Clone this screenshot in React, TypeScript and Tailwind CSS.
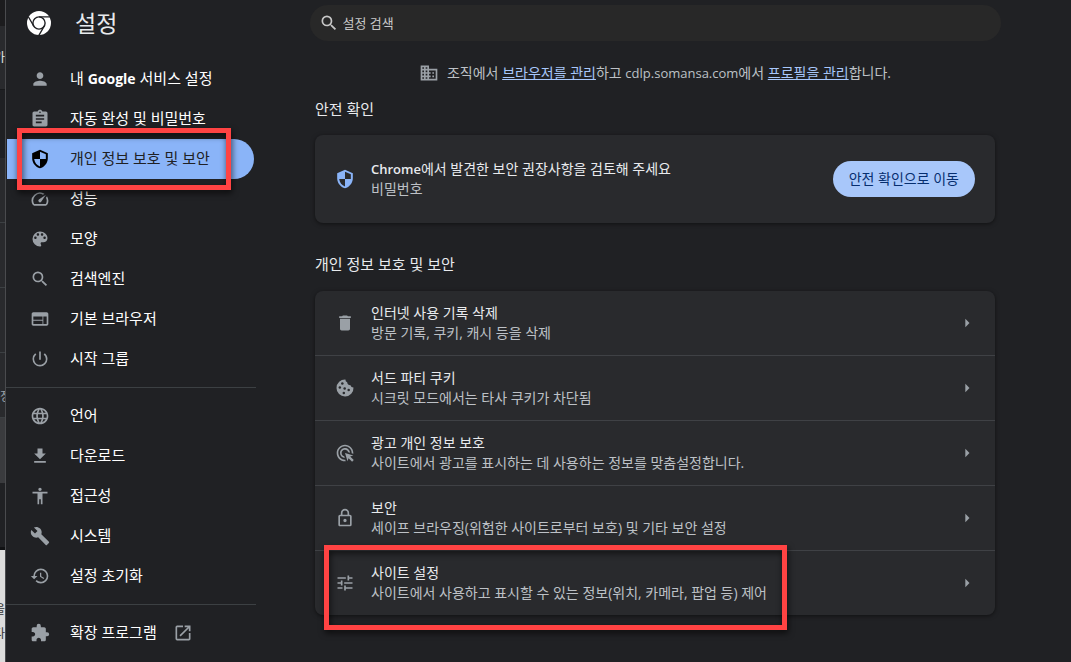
import type React from "react";

import {
  MdAccessibility,
  MdAdsClick,
  MdArrowRight,
  MdAssignment,
  MdBuild,
  MdDelete,
  MdDomain,
  MdDownload,
  MdExtension,
  MdHistory,
  MdLanguage,
  MdOpenInNew,
  MdPerson,
  MdPowerSettingsNew,
  MdSearch,
  MdTune,
  MdWeb,
} from "react-icons/md";

interface NavItem {
  icon: React.ElementType;
  label: React.ReactNode;
  active?: boolean;
  external?: boolean;
}

const mainItems: NavItem[] = [
  {
    icon: MdPerson,
    label: (
      <>
        내 <span className="text-sm font-bold">Google</span> 서비스 설정
      </>
    ),
  },
  { icon: MdAssignment, label: "자동 완성 및 비밀번호" },
  { icon: ShieldIcon, label: "개인 정보 보호 및 보안", active: true },
  { icon: SpeedIcon, label: "성능" },
  { icon: PaletteIcon, label: "모양" },
  { icon: MdSearch, label: "검색엔진" },
  { icon: MdWeb, label: "기본 브라우저" },
  { icon: MdPowerSettingsNew, label: "시작 그룹" },
];

const advancedItems: NavItem[] = [
  { icon: MdLanguage, label: "언어" },
  { icon: MdDownload, label: "다운로드" },
  { icon: MdAccessibility, label: "접근성" },
  { icon: MdBuild, label: "시스템" },
  { icon: MdHistory, label: "설정 초기화" },
];

const extensionItems: NavItem[] = [
  { icon: MdExtension, label: "확장 프로그램", external: true },
];

interface PrivacyRow {
  icon: React.ElementType;
  title: string;
  description: string;
  highlighted?: boolean;
}

const privacyRows: PrivacyRow[] = [
  {
    icon: MdDelete,
    title: "인터넷 사용 기록 삭제",
    description: "방문 기록, 쿠키, 캐시 등을 삭제",
  },
  {
    icon: CookieIcon,
    title: "서드 파티 쿠키",
    description: "시크릿 모드에서는 타사 쿠키가 차단됨",
  },
  {
    icon: MdAdsClick,
    title: "광고 개인 정보 보호",
    description: "사이트에서 광고를 표시하는 데 사용하는 정보를 맞춤설정합니다.",
  },
  {
    icon: LockIcon,
    title: "보안",
    description: "세이프 브라우징(위험한 사이트로부터 보호) 및 기타 보안 설정",
  },
  {
    icon: MdTune,
    title: "사이트 설정",
    description:
      "사이트에서 사용하고 표시할 수 있는 정보(위치, 카메라, 팝업 등) 제어",
    highlighted: true,
  },
];

export default function App() {
  return (
    <div className="flex min-h-screen bg-[#202124] font-['Open_Sans','Noto_Sans_CJK_KR',sans-serif] text-sm text-[#e8eaed]">
      <WindowBehind />
      <Sidebar />
      <main className="min-w-0 flex-1 pt-[5px] pr-[17px]">
        <SearchBox />
        <div className="mx-auto max-w-[680px]">
          <ManagedNotice />
          <SafetyCheck />
          <PrivacySection />
        </div>
      </main>
    </div>
  );
}

// Edge of the window that sits behind the settings window
function WindowBehind() {
  return (
    <div
      aria-hidden="true"
      className="flex w-[6px] shrink-0 flex-col overflow-hidden border-r border-[#4a4b4e] bg-[#202124] text-xs"
    >
      <div className="h-[26px] bg-[#1c1c1e]" />
      <div className="flex h-16 items-center justify-end border-b border-[#18191b] bg-[#292a2d]">
        가
      </div>
      <div className="h-[68px] bg-[#1f2023]" />
      <div className="h-[65px] border-b border-[#3c4043] bg-[#292a2d]" />
      <div className="h-[65px] border-b border-[#3c4043] bg-[#292a2d]" />
      <div className="h-[65px] border-b border-[#3c4043] bg-[#292a2d]" />
      <div className="flex h-[65px] items-end border-b border-[#3c4043] bg-[#292a2d] pb-3 text-[#9aa0a6]">
        정
      </div>
      <div className="h-[65px] bg-[#3a3b3e]" />
      <div className="h-16 bg-[#202124]" />
      <div className="h-[3px] bg-[#111214]" />
      <div className="flex flex-1 flex-col items-end gap-2 bg-[#dcdcdc] pt-[52px] text-[#333333]">
        <span>을</span>
        <span>다</span>
      </div>
    </div>
  );
}

function Sidebar() {
  return (
    <aside className="w-[250px] shrink-0">
      <header className="flex h-[46px] items-center gap-6 pl-[21px]">
        <ChromeLogo />
        <h1 className="text-[23px] leading-8">설정</h1>
      </header>
      <nav className="pt-[13px]">
        <NavList items={mainItems} />
        <hr className="mt-2 mb-2 border-[#3c4043]" />
        <NavList items={advancedItems} />
        <hr className="mt-2 mb-2 border-[#3c4043]" />
        <NavList items={extensionItems} />
      </nav>
    </aside>
  );
}

function NavList({ items }: { items: NavItem[] }) {
  return (
    <ul>
      {items.map((item, index) => (
        <li key={index} className="relative pr-[2px] pl-px">
          <NavLink item={item} />
          {item.active && (
            <Marker className="-top-[11px] left-[11px] h-[62px] w-[214px]" />
          )}
        </li>
      ))}
    </ul>
  );
}

function NavLink({ item }: { item: NavItem }) {
  const Icon = item.icon;

  return (
    <a
      href="#"
      className={
        item.active
          ? "flex h-10 items-center rounded-r-full bg-[#8ab4f8] pl-[23px] text-[15px] text-[#202124]"
          : "flex h-10 items-center rounded-r-full pl-[23px] text-[15px] text-white"
      }
    >
      <Icon
        className={
          item.active ? "size-5 text-black" : "size-5 text-[#9aa0a6]"
        }
      />
      <span className="ml-5 whitespace-nowrap">{item.label}</span>
      {item.external && <MdOpenInNew className="ml-4 size-5 text-[#9aa0a6]" />}
    </a>
  );
}

function SearchBox() {
  return (
    <label className="mx-auto flex h-9 max-w-[691px] items-center gap-1 rounded-full bg-[#282828] pl-[9px]">
      <MdSearch className="size-5 text-[#c7c7c7]" />
      <input
        type="search"
        aria-label="설정 검색"
        placeholder="설정 검색"
        className="min-w-0 flex-1 bg-transparent text-[13px] outline-none placeholder:text-[#c7c7c7]"
      />
    </label>
  );
}

function ManagedNotice() {
  return (
    <div className="flex h-[60px] items-center justify-center gap-2 pt-1 text-[#bdc1c6]">
      <MdDomain className="size-5 text-[#9aa0a6]" />
      <p>
        조직에서{" "}
        <a href="#" className="text-[#a8c7fa] underline">
          브라우저를 관리
        </a>
        하고 <span className="text-[13px]">cdlp.somansa.com</span>에서{" "}
        <a href="#" className="text-[#a8c7fa] underline">
          프로필을 관리
        </a>
        합니다.
      </p>
    </div>
  );
}

function SafetyCheck() {
  return (
    <section>
      <h2 className="pb-[18px] text-[15px] leading-4">안전 확인</h2>
      <div className="flex h-[88px] items-center rounded-lg bg-[#292a2d] px-5 shadow-[0_1px_4px_rgba(0,0,0,0.5)]">
        <ShieldIcon className="size-5 text-[#8ab4f8]" />
        <div className="ml-4 flex-1 leading-5">
          <p>
            <span className="text-[13px] font-semibold">Chrome</span>에서 발견한
            보안 권장사항을 검토해 주세요
          </p>
          <p className="text-[#bdc1c6]">비밀번호</p>
        </div>
        <button
          type="button"
          className="h-9 rounded-full bg-[#a8c7fa] px-4 text-[#062e6f]"
        >
          안전 확인으로 이동
        </button>
      </div>
    </section>
  );
}

function PrivacySection() {
  return (
    <section className="pt-[33px]">
      <h2 className="pb-[19px] text-[15px] leading-4">개인 정보 보호 및 보안</h2>
      <ul className="divide-y divide-[#3f4145] rounded-lg bg-[#292a2d] shadow-[0_1px_4px_rgba(0,0,0,0.5)]">
        {privacyRows.map((row) => {
          const Icon = row.icon;
          return (
            <li key={row.title} className="relative">
              <a href="#" className="flex h-16 items-center pr-[18px] pl-5">
                <Icon className="size-5 text-[#9aa0a6]" />
                <div className="ml-4 flex-1 leading-5">
                  <p>{row.title}</p>
                  <p className="text-[#bdc1c6]">{row.description}</p>
                </div>
                <MdArrowRight className="size-5 text-[#9aa0a6]" />
              </a>
              {row.highlighted && (
                <Marker className="-top-[6px] left-[9px] h-[85px] w-[463px]" />
              )}
            </li>
          );
        })}
      </ul>
    </section>
  );
}

// Red frame drawn around the step to click
function Marker({ className }: { className: string }) {
  return (
    <div
      className={`pointer-events-none absolute z-10 border-[5px] border-[#ff4343] [filter:drop-shadow(1px_3px_3px_rgba(0,0,0,0.7))] ${className}`}
    />
  );
}

function ChromeLogo() {
  return (
    <svg viewBox="0 0 24 24" className="size-6 shrink-0 text-white">
      <circle cx="12" cy="12" r="12" fill="currentColor" />
      <g fill="none" stroke="#202124" strokeWidth="1.4">
        <circle cx="12" cy="12" r="6.1" />
        <path d="M12 5.9h11M6.7 15 1.2 5.5M17.3 15l-5.5 9.5" />
      </g>
    </svg>
  );
}

function ShieldIcon({ className }: { className?: string }) {
  return (
    <svg viewBox="0 0 24 24" fill="currentColor" className={className}>
      <path
        fillRule="evenodd"
        d="M12 1 2.6 5v6c0 5.55 4 10.74 9.4 12 5.4-1.26 9.4-6.45 9.4-12V5L12 1zm0 11h7V6.3l-7-3.11V12zm0 0H5c.53 4.12 3.28 7.79 7 8.94V12z"
      />
    </svg>
  );
}

function SpeedIcon({ className }: { className?: string }) {
  return (
    <svg viewBox="0 0 24 24" fill="currentColor" className={className}>
      <path d="m20.38 8.57-1.23 1.85a8 8 0 0 1-.22 7.58H5.07A8 8 0 0 1 15.58 6.85l1.85-1.23A10 10 0 0 0 3.35 19a2 2 0 0 0 1.72 1h13.85a2 2 0 0 0 1.74-1 10 10 0 0 0-.27-10.44z" />
      <path d="M10.59 15.41a2 2 0 0 0 2.83 0l5.66-8.49-8.49 5.66a2 2 0 0 0 0 2.83z" />
    </svg>
  );
}

function PaletteIcon({ className }: { className?: string }) {
  return (
    <svg viewBox="0 0 24 24" fill="currentColor" className={className}>
      <path d="M12 3a9 9 0 0 0 0 18c.83 0 1.5-.67 1.5-1.5 0-.39-.15-.74-.39-1.01-.23-.26-.38-.61-.38-.99 0-.83.67-1.5 1.5-1.5H16c2.76 0 5-2.24 5-5 0-4.42-4.03-8-9-8zm-5.5 9c-.83 0-1.5-.67-1.5-1.5S5.67 9 6.5 9 8 9.67 8 10.5 7.33 12 6.5 12zm3-4C8.67 8 8 7.33 8 6.5S8.67 5 9.5 5s1.5.67 1.5 1.5S10.33 8 9.5 8zm5 0c-.83 0-1.5-.67-1.5-1.5S13.67 5 14.5 5s1.5.67 1.5 1.5S15.33 8 14.5 8zm3 4c-.83 0-1.5-.67-1.5-1.5S16.67 9 17.5 9s1.5.67 1.5 1.5-.67 1.5-1.5 1.5z" />
    </svg>
  );
}

function CookieIcon({ className }: { className?: string }) {
  return (
    <svg viewBox="0 0 24 24" fill="currentColor" className={className}>
      <path d="M12.5 1.8A10.2 10.2 0 1 0 22.2 11.4a3.6 3.6 0 0 1-3.6-2.6 4 4 0 0 1-4-3.6 3.4 3.4 0 0 1-2.1-3.4z" />
      <g className="fill-[#292a2d]">
        <circle cx="8.8" cy="6.6" r="1.5" />
        <circle cx="5.8" cy="11.4" r="1.5" />
        <circle cx="11.6" cy="12.6" r="1.5" />
        <circle cx="16.4" cy="14.4" r="1.5" />
        <circle cx="10.6" cy="18" r="1.5" />
      </g>
    </svg>
  );
}

function LockIcon({ className }: { className?: string }) {
  return (
    <svg viewBox="0 0 24 24" fill="currentColor" className={className}>
      <path d="M18 8h-1V6A5 5 0 0 0 7 6v2H6a2 2 0 0 0-2 2v10c0 1.1.9 2 2 2h12a2 2 0 0 0 2-2V10a2 2 0 0 0-2-2zM9 6a3 3 0 0 1 6 0v2H9V6zm9 14H6V10h12v10zm-6-3a2 2 0 1 0 0-4 2 2 0 0 0 0 4z" />
    </svg>
  );
}
